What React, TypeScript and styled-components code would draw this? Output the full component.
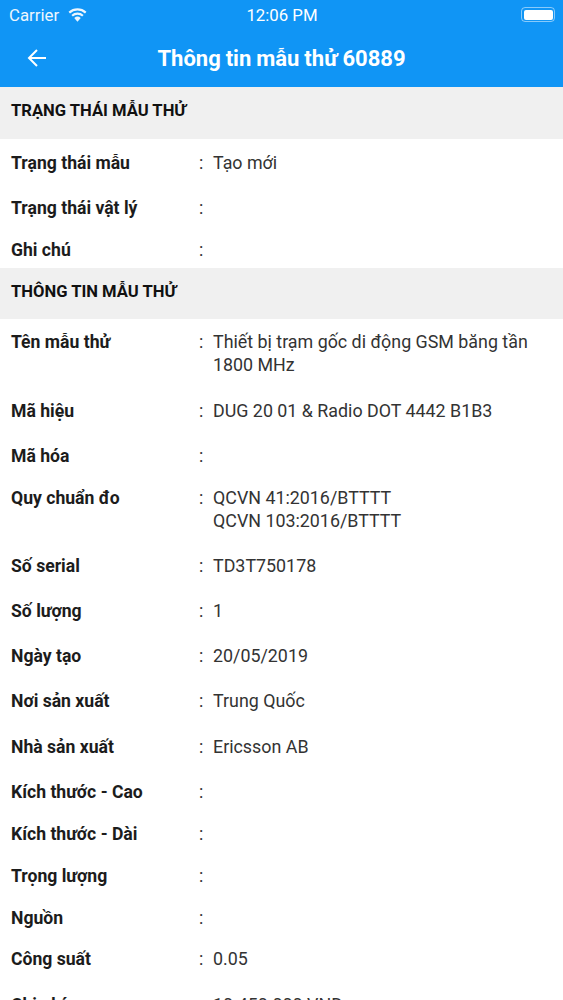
import React from 'react';
import styled, { createGlobalStyle } from 'styled-components';

const Global = createGlobalStyle`
  html, body { margin: 0; padding: 0; background: #fff; }
  body { font-family: Roboto, "Noto Sans", sans-serif; overflow: hidden; }
`;

const Page = styled.div`
  width: 563px;
  height: 1000px;
  overflow: hidden;
  background: #fff;
`;

const Header = styled.header`
  background: #1095f5;
  height: 87px;
  color: #fff;
`;

const StatusBar = styled.div`
  height: 29px;
  display: grid;
  grid-template-columns: 1fr auto 1fr;
  align-items: center;
  padding: 0 8px 0 9px;
  font-size: 16.8px;
`;

const Carrier = styled.div`
  display: flex;
  align-items: center;
  gap: 9px;
  opacity: 0.92;
`;

const Battery = styled.div`
  justify-self: end;
  position: relative;
  width: 34px;
  height: 15px;
  border: 1px solid rgba(255, 255, 255, 0.5);
  border-radius: 4px;
  padding: 1.5px;
  box-sizing: border-box;
  &::after { content: ''; display: block; height: 100%; background: #fff; border-radius: 2px; }
`;

const NavBar = styled.div`
  height: 58px;
  position: relative;
  display: flex;
  align-items: center;
  justify-content: center;
`;

const Back = styled.svg`
  position: absolute;
  left: 26px;
  top: 18px;
`;

const Title = styled.h1`
  margin: 0;
  font-size: 22px;
  font-weight: 700;
  word-spacing: -0.5px;
`;

const SectionHead = styled.div<{ $h: number }>`
  background: #f0f0f0;
  color: #111;
  font-size: 16.6px;
  font-weight: 700;
  padding: 14px 11px 0;
  height: ${p => p.$h}px;
  box-sizing: border-box;
`;

const Row = styled.div`
  display: grid;
  grid-template-columns: 188px 14px 1fr;
  align-items: start;
  padding: 11.5px 11px 10.7px;
  font-size: 17.85px;
  line-height: 23px;
  color: #333;
`;

const Label = styled.div`
  font-weight: 700;
  font-size: 17.6px;
  color: #1c1c1c;
  padding-top: 1px;
  margin-bottom: -4.3px;
`;

const Colon = styled.span`
  margin-bottom: -3.3px;
`;

const Value = styled.div`
  white-space: pre-line;
`;

const Wifi = () => (
  <svg width="19" height="14" viewBox="0 0 18 13" fill="#fff">
    <path d="M9 13 L5.9 9.4 A4.6 4.6 0 0 1 12.1 9.4 Z" />
    <path d="M4.6 8 L3.2 6.4 A8.6 8.6 0 0 1 14.8 6.4 L13.4 8 A6.5 6.5 0 0 0 4.6 8 Z" />
    <path d="M1.9 5 L.5 3.4 A12.6 12.6 0 0 1 17.5 3.4 L16.1 5 A10.5 10.5 0 0 0 1.9 5 Z" />
  </svg>
);

const rows1: [string, string][] = [
  ['Trạng thái mẫu', 'Tạo mới'],
  ['Trạng thái vật lý', ''],
  ['Ghi chú', ''],
];

const rows2: [string, string][] = [
  ['Tên mẫu thử', 'Thiết bị trạm gốc di động GSM băng tần\n1800 MHz'],
  ['Mã hiệu', 'DUG 20 01 & Radio DOT 4442 B1B3'],
  ['Mã hóa', ''],
  ['Quy chuẩn đo', 'QCVN 41:2016/BTTTT\nQCVN 103:2016/BTTTT'],
  ['Số serial', 'TD3T750178'],
  ['Số lượng', '1'],
  ['Ngày tạo', '20/05/2019'],
  ['Nơi sản xuất', 'Trung Quốc'],
  ['Nhà sản xuất', 'Ericsson AB'],
  ['Kích thước - Cao', ''],
  ['Kích thước - Dài', ''],
  ['Trọng lượng', ''],
  ['Nguồn', ''],
  ['Công suất', '0.05'],
  ['Chi phí', '10.450.000 VND'],
];

const renderRow = ([label, value]: [string, string]) => (
  <Row key={label}>
    <Label>{label}</Label>
    <Colon>:</Colon>
    <Value>{value}</Value>
  </Row>
);

export default function App() {
  return (
    <Page>
      <Global />
      <Header>
        <StatusBar>
          <Carrier>Carrier <Wifi /></Carrier>
          <div>12:06 PM</div>
          <Battery />
        </StatusBar>
        <NavBar>
          <Back width="22" height="22" viewBox="0 0 22 22" fill="none" stroke="#fff" strokeWidth="2">
            <path d="M20 11H3M11 3l-8 8 8 8" />
          </Back>
          <Title>Thông tin mẫu thử 60889</Title>
        </NavBar>
      </Header>
      <SectionHead $h={52}>TRẠNG THÁI MẪU THỬ</SectionHead>
      {rows1.map(renderRow)}
      <SectionHead $h={51}>THÔNG TIN MẪU THỬ</SectionHead>
      {rows2.map(renderRow)}
    </Page>
  );
}
